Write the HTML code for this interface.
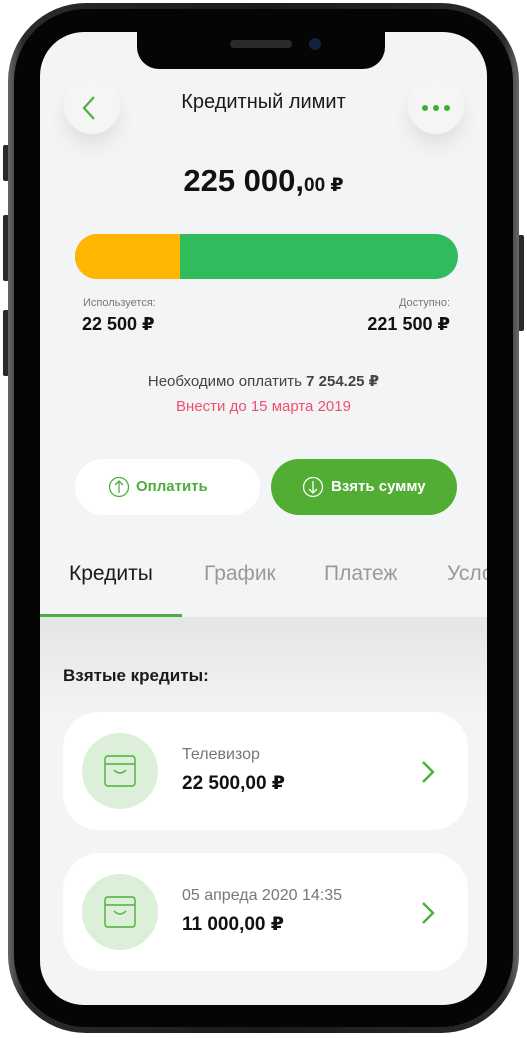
<!DOCTYPE html>
<html><head><meta charset="utf-8"><style>
*{margin:0;padding:0;box-sizing:border-box}
body{width:527px;height:1038px;background:#fff;position:relative;overflow:hidden;font-family:"Liberation Sans","DejaVu Sans",sans-serif}
.a{position:absolute}
.body{left:8px;top:3px;width:511px;height:1030px;border-radius:78px;background:linear-gradient(90deg,#666,#2a2a2a 3%,#1a1a1a 50%,#2a2a2a 97%,#666);}
.bez{left:14px;top:9px;width:499px;height:1018px;border-radius:72px;background:#050505}
.screen{left:40px;top:32px;width:447px;height:973px;border-radius:44px;background:#f3f4f6;overflow:hidden}
.btn{background:#2a2a2a;border-radius:2px}
.t{white-space:nowrap}
</style></head><body>
<div class="a btn" style="left:3px;top:145px;width:6px;height:36px"></div>
<div class="a btn" style="left:3px;top:215px;width:6px;height:66px"></div>
<div class="a btn" style="left:3px;top:310px;width:6px;height:66px"></div>
<div class="a btn" style="left:518px;top:235px;width:6px;height:96px"></div>
<div class="a body"></div>
<div class="a bez"></div>
<div class="a screen">
  <div class="a" style="left:0;top:585px;width:447px;height:100px;background:linear-gradient(#e4e5e7,#f3f4f6)"></div>
  <div class="a" style="left:24px;top:46px;width:56px;height:56px;border-radius:50%;background:#f5f5f6;box-shadow:0 12px 18px rgba(0,0,0,.08)"></div>
  <svg class="a" style="left:38px;top:62px" width="22" height="28"><path d="M16 3 L6 14 L16 25" stroke="#4caf3c" stroke-width="2.2" fill="none"/></svg>
  <div class="a" style="left:368px;top:46px;width:56px;height:56px;border-radius:50%;background:#f5f5f6;box-shadow:0 12px 18px rgba(0,0,0,.08)"></div>
  <div class="a" style="left:382px;top:73px;width:28px;height:6px">
    <span class="a" style="left:0;top:0;width:6px;height:6px;border-radius:50%;background:#3fae35"></span>
    <span class="a" style="left:11px;top:0;width:6px;height:6px;border-radius:50%;background:#3fae35"></span>
    <span class="a" style="left:22px;top:0;width:6px;height:6px;border-radius:50%;background:#3fae35"></span>
  </div>
  <div class="a t" style="left:0;width:447px;top:59px;text-align:center;font-size:20px;color:#1a1a1a">Кредитный лимит</div>
  <div class="a t" style="left:0;width:447px;top:131px;text-align:center;font-size:31px;font-weight:bold;color:#111">225 000,<span style="font-size:19px">00 ₽</span></div>
  <div class="a" style="left:35px;top:202px;width:383px;height:45px;border-radius:23px;background:#31bb5d;overflow:hidden"><div style="width:105px;height:45px;background:#ffb600"></div></div>
  <div class="a t" style="left:43px;top:265px;font-size:11px;color:#777">Используется:</div>
  <div class="a t" style="left:42px;top:282px;font-size:18px;font-weight:bold;color:#111">22 500 ₽</div>
  <div class="a t" style="right:37px;top:265px;font-size:11px;color:#777">Доступно:</div>
  <div class="a t" style="right:37px;top:282px;font-size:18px;font-weight:bold;color:#111">221 500 ₽</div>
  <div class="a t" style="left:0;width:447px;top:340px;text-align:center;font-size:15px;color:#444">Необходимо оплатить <b>7 254.25 ₽</b></div>
  <div class="a t" style="left:0;width:447px;top:366px;text-align:center;font-size:15px;color:#f0506e">Внести до 15 марта 2019</div>
  <div class="a" style="left:35px;top:427px;width:185px;height:56px;border-radius:28px;background:#fff"></div>
  <svg class="a" style="left:68px;top:444px" width="22" height="22"><circle cx="11" cy="11" r="9.5" stroke="#4caf3c" stroke-width="1.3" fill="none"/><path d="M11 17V5M7 9l4-4 4 4" stroke="#4caf3c" stroke-width="1.3" fill="none"/></svg>
  <div class="a t" style="left:96px;top:446px;font-size:15px;font-weight:bold;color:#4caf3c">Оплатить</div>
  <div class="a" style="left:231px;top:427px;width:186px;height:56px;border-radius:28px;background:#52ad34"></div>
  <svg class="a" style="left:262px;top:444px" width="22" height="22"><circle cx="11" cy="11" r="9.5" stroke="#fff" stroke-width="1.3" fill="none"/><path d="M11 5v12M7 13l4 4 4-4" stroke="#fff" stroke-width="1.3" fill="none"/></svg>
  <div class="a t" style="left:291px;top:446px;font-size:15px;font-weight:bold;color:#fff">Взять сумму</div>
  <div class="a t" style="left:29px;top:530px;font-size:21px;color:#1a1a1a">Кредиты</div>
  <div class="a t" style="left:164px;top:530px;font-size:21px;color:#999">График</div>
  <div class="a t" style="left:284px;top:530px;font-size:21px;color:#999">Платеж</div>
  <div class="a t" style="left:407px;top:530px;font-size:21px;color:#999">Условия</div>
  <div class="a" style="left:0;top:582px;width:142px;height:3px;background:#4caf3c"></div>
  <div class="a t" style="left:23px;top:634px;font-size:17px;font-weight:bold;color:#1a1a1a">Взятые кредиты:</div>
  <div class="a" style="left:23px;top:680px;width:405px;height:118px;border-radius:36px;background:#fff"></div>
  <div class="a" style="left:42px;top:701px;width:76px;height:76px;border-radius:50%;background:#dcefd8"></div>
  <svg class="a" style="left:62px;top:721px" width="36" height="36"><rect x="3" y="3" width="30" height="30" rx="3" stroke="#4caf3c" stroke-width="1.4" fill="none"/><path d="M3 11H33M12 17q6 6 12 0" stroke="#4caf3c" stroke-width="1.4" fill="none"/></svg>
  <div class="a t" style="left:142px;top:714px;font-size:16px;color:#777">Телевизор</div>
  <div class="a t" style="left:142px;top:740px;font-size:19px;font-weight:bold;color:#111">22 500,00 ₽</div>
  <svg class="a" style="left:378px;top:727px" width="20" height="26"><path d="M5 3l10 10-10 10" stroke="#4caf3c" stroke-width="2.4" fill="none"/></svg>
  <div class="a" style="left:23px;top:821px;width:405px;height:118px;border-radius:36px;background:#fff"></div>
  <div class="a" style="left:42px;top:842px;width:76px;height:76px;border-radius:50%;background:#dcefd8"></div>
  <svg class="a" style="left:62px;top:862px" width="36" height="36"><rect x="3" y="3" width="30" height="30" rx="3" stroke="#4caf3c" stroke-width="1.4" fill="none"/><path d="M3 11H33M12 17q6 6 12 0" stroke="#4caf3c" stroke-width="1.4" fill="none"/></svg>
  <div class="a t" style="left:142px;top:855px;font-size:16px;color:#777">05 апреда 2020 14:35</div>
  <div class="a t" style="left:142px;top:881px;font-size:19px;font-weight:bold;color:#111">11 000,00 ₽</div>
  <svg class="a" style="left:378px;top:868px" width="20" height="26"><path d="M5 3l10 10-10 10" stroke="#4caf3c" stroke-width="2.4" fill="none"/></svg>
</div>
<div class="a" style="left:137px;top:30px;width:248px;height:39px;background:#050505;border-radius:0 0 22px 22px"></div>
<div class="a" style="left:230px;top:40px;width:62px;height:8px;border-radius:4px;background:#2a2a2a"></div>
<div class="a" style="left:309px;top:38px;width:12px;height:12px;border-radius:50%;background:#13213a"></div>
</body></html>
